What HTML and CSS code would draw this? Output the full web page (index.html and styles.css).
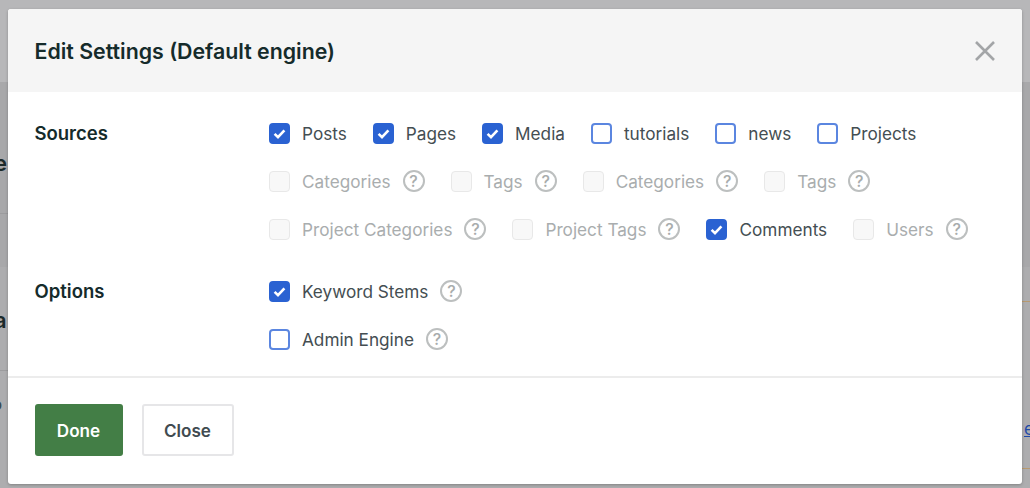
FILE: index.html
```html
<!DOCTYPE html>
<html lang="en">
<head>
<meta charset="utf-8">
<title>Edit Settings</title>
<link rel="stylesheet" href="styles.css">
</head>
<body>
<div class="backdrop">
  <span class="band band-top"></span>
  <span class="band band-mid"></span>
  <span class="bg-text bg-e">e</span>
  <span class="bg-text bg-a">a</span>
  <span class="bg-text bg-p">p</span>
  <span class="bg-line bg-line-l1"></span>
  <span class="bg-line bg-line-l2"></span>
  <span class="bg-line bg-line-r1"></span>
  <span class="bg-line bg-line-r2"></span>
  <span class="bg-link">e</span>
</div>
<main class="modal">
  <header class="modal-head">
    <h1 class="modal-title">Edit Settings (Default engine)</h1>
    <svg class="close-icon" viewBox="0 0 22 22" width="22" height="22" aria-hidden="true"><path d="M2 2 20 20M20 2 2 20"/></svg>
  </header>
  <section class="modal-body">
    <div class="group">
      <div class="group-label">Sources</div>
      <div class="fields">
        <div class="row">
          <label class="item"><span class="box checked"><svg viewBox="0 0 21 21"><path d="M5.6 10.8 9 14.2 15.4 7.4"/></svg></span>Posts</label>
          <label class="item"><span class="box checked"><svg viewBox="0 0 21 21"><path d="M5.6 10.8 9 14.2 15.4 7.4"/></svg></span>Pages</label>
          <label class="item"><span class="box checked"><svg viewBox="0 0 21 21"><path d="M5.6 10.8 9 14.2 15.4 7.4"/></svg></span>Media</label>
          <label class="item"><span class="box"></span>tutorials</label>
          <label class="item"><span class="box"></span>news</label>
          <label class="item"><span class="box"></span>Projects</label>
        </div>
        <div class="row">
          <label class="item off"><span class="box"></span>Categories<span class="help">?</span></label>
          <label class="item off"><span class="box"></span>Tags<span class="help">?</span></label>
          <label class="item off"><span class="box"></span>Categories<span class="help">?</span></label>
          <label class="item off"><span class="box"></span>Tags<span class="help">?</span></label>
        </div>
        <div class="row">
          <label class="item off"><span class="box"></span>Project Categories<span class="help">?</span></label>
          <label class="item off"><span class="box"></span>Project Tags<span class="help">?</span></label>
          <label class="item"><span class="box checked"><svg viewBox="0 0 21 21"><path d="M5.6 10.8 9 14.2 15.4 7.4"/></svg></span>Comments</label>
          <label class="item off"><span class="box"></span>Users<span class="help">?</span></label>
        </div>
      </div>
    </div>
    <div class="group">
      <div class="group-label">Options</div>
      <div class="fields">
        <div class="row">
          <label class="item"><span class="box checked"><svg viewBox="0 0 21 21"><path d="M5.6 10.8 9 14.2 15.4 7.4"/></svg></span>Keyword Stems<span class="help">?</span></label>
        </div>
        <div class="row">
          <label class="item"><span class="box"></span>Admin Engine<span class="help">?</span></label>
        </div>
      </div>
    </div>
  </section>
  <footer class="modal-foot">
    <button class="btn btn-done">Done</button>
    <button class="btn btn-close">Close</button>
  </footer>
</main>
</body>
</html>
```
FILE: styles.css
```css
* { box-sizing: border-box; }
html, body { margin: 0; height: 100%; }
body {
  width: 1030px;
  height: 488px;
  overflow: hidden;
  background: #adadaf;
  font-family: Inter, "Liberation Sans", sans-serif;
  padding: 9px 8px 4px;
  position: relative;
}
.backdrop { position: absolute; inset: 0; overflow: hidden; }
.band { position: absolute; left: 0; right: 0; }
.band-top { top: 0; height: 82px; background: #b7b7b9; }
.band-mid { top: 82px; height: 185px; background: #a8a8aa; }
.bg-text { position: absolute; color: #1c2a2a; font-size: 22px; font-weight: 600; line-height: 24px; }
.bg-e { top: 151px; left: -6px; }
.bg-a { top: 308px; left: -6px; }
.bg-p { top: 392px; left: -8px; color: #3c4a50; font-size: 16px; }
.bg-line { position: absolute; height: 1px; background: #9c9c9e; }
.bg-line-l1 { left: 0; width: 8px; top: 213px; }
.bg-line-l2 { left: 0; width: 8px; top: 370px; }
.bg-line-r1 { left: 1022px; width: 8px; top: 301px; background: #b89a70; }
.bg-line-r2 { left: 1022px; width: 8px; top: 468px; background: #b89a70; }
.bg-link { position: absolute; left: 1024px; top: 418px; color: #1f4aa8; font-size: 17px; line-height: 22px; text-decoration: underline; }

.modal {
  position: relative;
  width: 1014px;
  height: 475px;
  background: #fff;
  border-radius: 3px;
  display: flex;
  flex-direction: column;
  box-shadow: 0 1px 3px rgba(0,0,0,.25);
}
.modal-head {
  height: 83px;
  flex: none;
  background: #f5f5f5;
  border-radius: 3px 3px 0 0;
  padding: 0 26px 0 26.5px;
  display: flex;
  align-items: center;
  justify-content: space-between;
}
.modal-title { margin: 0; font-size: 21.33px; font-weight: 600; color: #152b2b; }
.close-icon { fill: none; stroke: #a3a5a7; stroke-width: 2.6; }

.modal-body { flex: 1; padding: 17px 27px 0 26.5px; }
.group { display: flex; margin-bottom: 14px; }
.group:last-child { margin-bottom: 0; }
.group-label { width: 234.5px; flex: none; font-size: 18.5px; font-weight: 600; color: #152b2b; line-height: 48px; }
.fields { display: flex; flex-direction: column; }
.row { display: flex; height: 48px; align-items: center; gap: 26px; }
.item { display: flex; align-items: center; font-size: 17.2px; color: #444e52; white-space: nowrap; }
.box {
  width: 21px;
  height: 21px;
  margin-right: 12px;
  border-radius: 4px;
  border: 2px solid #5b86e0;
  background: #fff;
  flex: none;
  position: relative;
}
.box.checked { background: #2a62d2; border-color: #2a62d2; }
.box svg { position: absolute; left: -2px; top: -2px; width: 21px; height: 21px; fill: none; stroke: #fff; stroke-width: 2.6; }
.item.off { color: #a9adae; }
.item.off .box { border: 1px solid #e8e8e8; background: #f8f8f8; }
.help {
  width: 22px;
  height: 22px;
  margin-left: 12px;
  border: 2px solid #bcbfbf;
  border-radius: 50%;
  color: #a8acac;
  font-size: 16px;
  font-weight: 500;
  display: flex;
  align-items: center;
  justify-content: center;
  flex: none;
}
.modal-foot {
  flex: none;
  height: 108px;
  border-top: 2px solid #ececec;
  padding: 26px 27px 0 26.5px;
  display: flex;
  align-items: flex-start;
  gap: 19px;
}
.btn { height: 52px; border-radius: 3px; font: 600 17.1px Inter, "Liberation Sans", sans-serif; cursor: pointer; }
.btn-done { width: 88px; background: #437e46; border: 0; color: #fff; }
.btn-close { width: 92px; background: #fff; border: 2px solid #e6e6e8; color: #414b50; }
```
